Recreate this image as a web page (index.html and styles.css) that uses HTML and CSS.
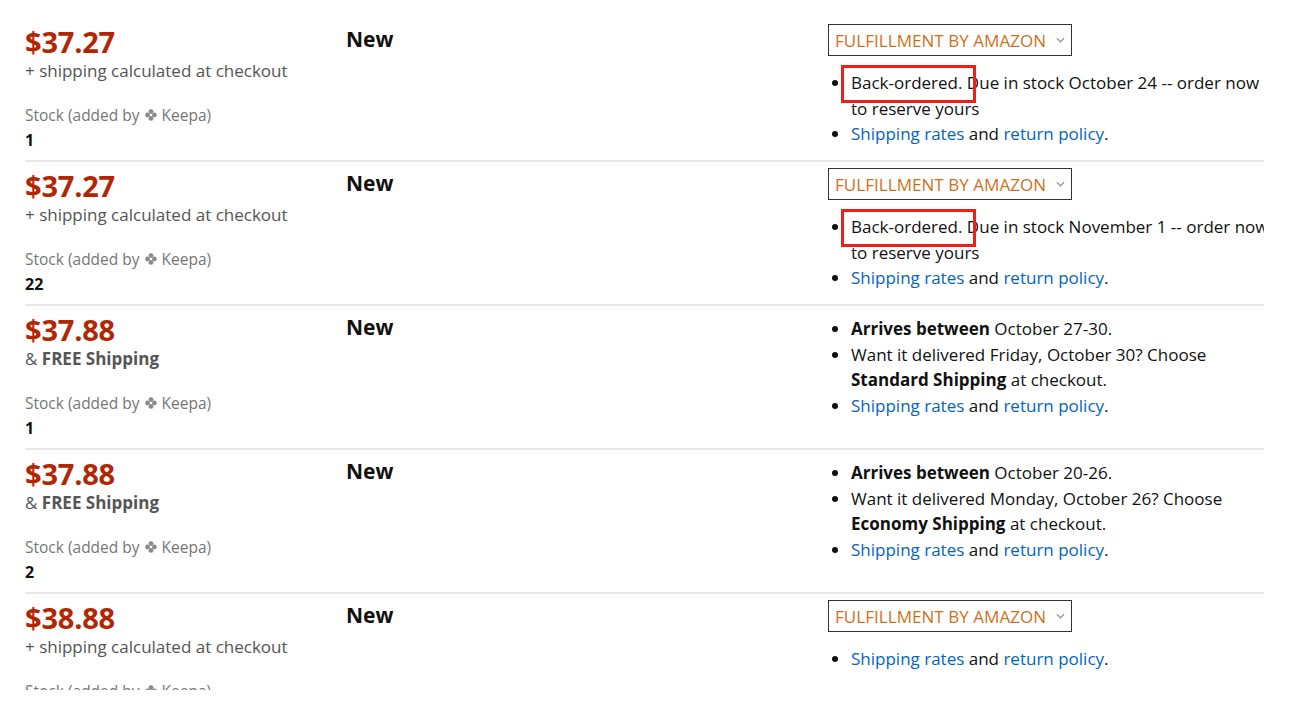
FILE: index.html
```html
<!DOCTYPE html>
<html>
<head>
<meta charset="utf-8">
<link rel="stylesheet" href="styles.css">
</head>
<body>
<div class="page">
  <div class="offer">
    <div class="col-price">
      <div class="price">$37.27</div>
      <div class="ship">+ shipping calculated at checkout</div>
      <div class="stock-label">Stock (added by <svg class="keepa" viewBox="0 0 12 12"><circle cx="6" cy="2.6" r="2.4"/><circle cx="6" cy="9.4" r="2.4"/><circle cx="2.6" cy="6" r="2.4"/><circle cx="9.4" cy="6" r="2.4"/></svg> Keepa)</div>
      <div class="stock-num">1</div>
    </div>
    <div class="col-cond">New</div>
    <div class="col-del">
      <div class="fba">FULFILLMENT BY AMAZON <svg class="chev" viewBox="0 0 10 6"><path d="M1 1 L5 5 L9 1"/></svg></div>
      <ul class="del-list">
        <li><span class="mark"></span>Back-ordered. Due in stock October 24 -- order now to reserve yours</li>
        <li><a href="#">Shipping rates</a> and <a href="#">return policy</a>.</li>
      </ul>
    </div>
  </div>

  <div class="offer">
    <div class="col-price">
      <div class="price">$37.27</div>
      <div class="ship">+ shipping calculated at checkout</div>
      <div class="stock-label">Stock (added by <svg class="keepa" viewBox="0 0 12 12"><circle cx="6" cy="2.6" r="2.4"/><circle cx="6" cy="9.4" r="2.4"/><circle cx="2.6" cy="6" r="2.4"/><circle cx="9.4" cy="6" r="2.4"/></svg> Keepa)</div>
      <div class="stock-num">22</div>
    </div>
    <div class="col-cond">New</div>
    <div class="col-del">
      <div class="fba">FULFILLMENT BY AMAZON <svg class="chev" viewBox="0 0 10 6"><path d="M1 1 L5 5 L9 1"/></svg></div>
      <ul class="del-list">
        <li><span class="mark"></span>Back-ordered. Due in stock November 1 -- order now to reserve yours</li>
        <li><a href="#">Shipping rates</a> and <a href="#">return policy</a>.</li>
      </ul>
    </div>
  </div>

  <div class="offer">
    <div class="col-price">
      <div class="price">$37.88</div>
      <div class="ship">&amp; <b>FREE Shipping</b></div>
      <div class="stock-label">Stock (added by <svg class="keepa" viewBox="0 0 12 12"><circle cx="6" cy="2.6" r="2.4"/><circle cx="6" cy="9.4" r="2.4"/><circle cx="2.6" cy="6" r="2.4"/><circle cx="9.4" cy="6" r="2.4"/></svg> Keepa)</div>
      <div class="stock-num">1</div>
    </div>
    <div class="col-cond">New</div>
    <div class="col-del">
      <ul class="del-list nobox">
        <li><b>Arrives between</b> October 27-30.</li>
        <li>Want it delivered Friday, October 30? Choose <b>Standard Shipping</b> at checkout.</li>
        <li><a href="#">Shipping rates</a> and <a href="#">return policy</a>.</li>
      </ul>
    </div>
  </div>

  <div class="offer">
    <div class="col-price">
      <div class="price">$37.88</div>
      <div class="ship">&amp; <b>FREE Shipping</b></div>
      <div class="stock-label">Stock (added by <svg class="keepa" viewBox="0 0 12 12"><circle cx="6" cy="2.6" r="2.4"/><circle cx="6" cy="9.4" r="2.4"/><circle cx="2.6" cy="6" r="2.4"/><circle cx="9.4" cy="6" r="2.4"/></svg> Keepa)</div>
      <div class="stock-num">2</div>
    </div>
    <div class="col-cond">New</div>
    <div class="col-del">
      <ul class="del-list nobox">
        <li><b>Arrives between</b> October 20-26.</li>
        <li>Want it delivered Monday, October 26? Choose <b>Economy Shipping</b> at checkout.</li>
        <li><a href="#">Shipping rates</a> and <a href="#">return policy</a>.</li>
      </ul>
    </div>
  </div>

  <div class="offer">
    <div class="col-price">
      <div class="price">$38.88</div>
      <div class="ship">+ shipping calculated at checkout</div>
      <div class="stock-label">Stock (added by <svg class="keepa" viewBox="0 0 12 12"><circle cx="6" cy="2.6" r="2.4"/><circle cx="6" cy="9.4" r="2.4"/><circle cx="2.6" cy="6" r="2.4"/><circle cx="9.4" cy="6" r="2.4"/></svg> Keepa)</div>
      <div class="stock-num">1</div>
    </div>
    <div class="col-cond">New</div>
    <div class="col-del">
      <div class="fba">FULFILLMENT BY AMAZON <svg class="chev" viewBox="0 0 10 6"><path d="M1 1 L5 5 L9 1"/></svg></div>
      <ul class="del-list">
        <li><a href="#">Shipping rates</a> and <a href="#">return policy</a>.</li>
      </ul>
    </div>
  </div>
</div>
</body>
</html>
```

FILE: styles.css
```css
html, body {
  margin: 0;
  padding: 0;
  background: #fff;
}
body {
  font-family: "Open Sans", "Noto Sans", Arial, sans-serif;
  color: #111;
  font-size: 17px;
}
.page {
  margin: 18px 0 0 25px;
  width: 1239px;
  height: 672px;
  overflow: hidden;
}
.offer {
  display: grid;
  grid-template-columns: 321px 482px 436px;
  border-bottom: 2px solid #e7e7e7;
  height: 142px;
}
.col-price {
  padding-top: 9px;
}
.price {
  color: #b12704;
  font-size: 29px;
  font-weight: 700;
  line-height: 30px;
  letter-spacing: -0.2px;
}
.ship {
  color: #555;
  font-size: 17px;
  line-height: 28px;
}
.ship b {
  color: #555;
}
.stock-label {
  margin-top: 18px;
  color: #767676;
  font-size: 15.5px;
  line-height: 24px;
  display: flex;
  align-items: center;
  white-space: pre;
}
.keepa {
  width: 12px;
  height: 12px;
  fill: #8a8a8a;
  margin: 0 1px;
}
.stock-num {
  font-size: 16px;
  font-weight: 700;
  line-height: 26px;
  color: #111;
}
.col-cond {
  padding-top: 9px;
  font-size: 21px;
  font-weight: 700;
  line-height: 24px;
  color: #111;
}
.col-del {
  padding-top: 6px;
  white-space: nowrap;
  min-width: 0;
}
.fba {
  display: inline-flex;
  align-items: center;
  border: 1px solid #333;
  height: 32px;
  box-sizing: border-box;
  padding: 0 6px;
  color: #d0701c;
  font-size: 17px;
  letter-spacing: 0.05px;
}
.chev {
  width: 9px;
  height: 6px;
  margin-left: 10px;
  fill: none;
  stroke: #888;
  stroke-width: 1.3;
}
.del-list {
  margin: 14px 0 0 0;
  padding-left: 23px;
  font-size: 17px;
  line-height: 25.5px;
  width: 427px;
  white-space: normal;
}
.del-list.nobox {
  margin-top: 4px;
}
.del-list li {
  position: relative;
}
.del-list a {
  color: #0066c0;
  text-decoration: none;
}
.mark {
  position: absolute;
  left: -10px;
  top: -5px;
  width: 135px;
  height: 38px;
  box-sizing: border-box;
  border: 3px solid #f21d14;
}
```
